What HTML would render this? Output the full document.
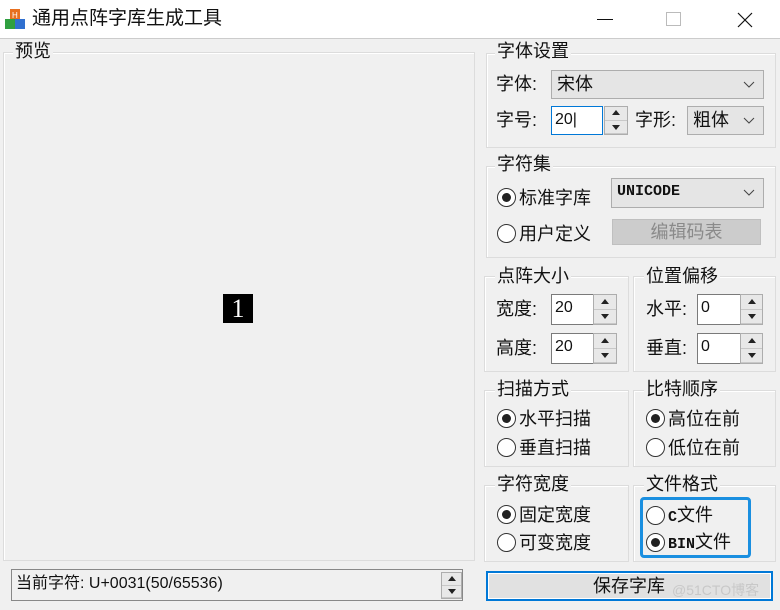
<!DOCTYPE html>
<html><head><meta charset="utf-8"><style>
*{box-sizing:border-box;margin:0;padding:0}
body{width:780px;height:610px;background:#f0f0f0;position:relative;overflow:hidden;font-family:"Liberation Sans","Noto Sans CJK SC",sans-serif;font-size:18px;color:#111}
.a{position:absolute}
.t{position:absolute;white-space:nowrap;line-height:22px}
.gb{position:absolute;border:1px solid #dcdcdc;box-shadow:inset 1px 1px 0 #fff}
.lbl{position:absolute;background:#f0f0f0;padding:0 2px;line-height:22px;white-space:nowrap;font-size:18px}
.edit{position:absolute;background:#fff;border:1px solid #7a7a7a;font-size:16px;line-height:26px;padding-left:3px}
.spin{position:absolute;border:1px solid #adadad;background:#e8e8e8}
.spin div{height:50%;border-bottom:1px solid #c8c8c8;position:relative}
.spin div:after{content:"";position:absolute;left:50%;top:50%;margin-left:-4px;border-left:4px solid transparent;border-right:4px solid transparent}
.up:after{border-bottom:5px solid #222;margin-top:-3px}
.dn:after{border-top:5px solid #222;margin-top:-2px}
.combo{position:absolute;background:#e5e5e5;border:1px solid #adadad;line-height:26px;padding-left:5px}
.combo svg{position:absolute;right:8px;top:10px}
.rad{position:absolute;width:19px;height:19px;border-radius:50%;border:1.5px solid #333;background:#fff}
.rad.on:after{content:"";position:absolute;left:3.5px;top:3.5px;width:9px;height:9px;border-radius:50%;background:#222}
</style></head><body>
<div class="a" style="left:0;top:0;width:780px;height:39px;background:#fff;border-bottom:1px solid #ccc"></div>
<svg class="a" style="left:4px;top:8px" width="22" height="22"><rect x="6" y="1" width="10" height="10" fill="#e87020"/><text x="8" y="10" font-size="8" fill="#fff">H</text><rect x="1" y="11" width="10" height="10" fill="#30a040"/><rect x="11" y="11" width="10" height="10" fill="#3070d0"/></svg>
<div class="t" style="left:32px;top:8px;font-size:19px">通用点阵字库生成工具</div>
<div class="a" style="left:597px;top:19px;width:16px;height:1px;background:#111"></div>
<div class="a" style="left:666px;top:12px;width:15px;height:14px;border:1px solid #bbb"></div>
<svg class="a" style="left:737px;top:12px" width="16" height="16"><path d="M1 1L15 15M15 1L1 15" stroke="#111" stroke-width="1.2"/></svg>

<div class="gb" style="left:3px;top:52px;width:472px;height:509px"></div>
<div class="lbl" style="left:13px;top:40px">预览</div>
<div class="a" style="left:223px;top:294px;width:30px;height:29px;background:#000;color:#fff;font-family:'Liberation Serif',serif;font-size:26px;text-align:center;line-height:30px">1</div>

<div class="a" style="left:11px;top:569px;width:452px;height:32px;border:1px solid #888;background:#f0f0f0"></div>
<div class="t" style="left:16px;top:573px;font-size:16px">当前字符: U+0031(50/65536)</div>
<div class="spin" style="left:441px;top:572px;width:21px;height:27px"><div class="up"></div><div class="dn"></div></div>

<!-- 字体设置 -->
<div class="gb" style="left:486px;top:53px;width:290px;height:95px"></div>
<div class="lbl" style="left:495px;top:40px">字体设置</div>
<div class="t" style="left:496px;top:73px">字体:</div>
<div class="combo" style="left:551px;top:70px;width:213px;height:29px">宋体<svg width="12" height="8"><path d="M1 1L6 6L11 1" stroke="#444" fill="none"/></svg></div>
<div class="t" style="left:496px;top:109px">字号:</div>
<div class="edit" style="left:551px;top:106px;width:52px;height:29px;border:1.5px solid #0078d7">20|</div>
<div class="spin" style="left:604px;top:106px;width:24px;height:29px"><div class="up"></div><div class="dn"></div></div>
<div class="t" style="left:635px;top:109px">字形:</div>
<div class="combo" style="left:687px;top:106px;width:77px;height:29px">粗体<svg width="12" height="8"><path d="M1 1L6 6L11 1" stroke="#444" fill="none"/></svg></div>

<!-- 字符集 -->
<div class="gb" style="left:486px;top:166px;width:290px;height:92px"></div>
<div class="lbl" style="left:495px;top:153px">字符集</div>
<div class="rad on" style="left:497px;top:188px"></div><div class="t" style="left:519px;top:187px">标准字库</div>
<div class="combo" style="left:611px;top:178px;width:153px;height:30px;font-family:'Liberation Mono',monospace;font-size:15px;font-weight:bold">UNICODE<svg width="12" height="8"><path d="M1 1L6 6L11 1" stroke="#444" fill="none"/></svg></div>
<div class="rad" style="left:497px;top:224px"></div><div class="t" style="left:519px;top:223px">用户定义</div>
<div class="a" style="left:612px;top:219px;width:149px;height:26px;background:#ccc;border:1px solid #bfbfbf;color:#8a8a8a;text-align:center;line-height:24px">编辑码表</div>

<!-- 点阵大小 -->
<div class="gb" style="left:484px;top:276px;width:145px;height:96px"></div>
<div class="lbl" style="left:495px;top:265px">点阵大小</div>
<div class="t" style="left:496px;top:298px">宽度:</div>
<div class="edit" style="left:551px;top:294px;width:43px;height:31px">20</div>
<div class="spin" style="left:593px;top:294px;width:24px;height:31px"><div class="up"></div><div class="dn"></div></div>
<div class="t" style="left:496px;top:337px">高度:</div>
<div class="edit" style="left:551px;top:333px;width:43px;height:31px">20</div>
<div class="spin" style="left:593px;top:333px;width:24px;height:31px"><div class="up"></div><div class="dn"></div></div>

<!-- 位置偏移 -->
<div class="gb" style="left:633px;top:276px;width:143px;height:96px"></div>
<div class="lbl" style="left:644px;top:265px">位置偏移</div>
<div class="t" style="left:646px;top:298px">水平:</div>
<div class="edit" style="left:697px;top:294px;width:44px;height:31px">0</div>
<div class="spin" style="left:740px;top:294px;width:23px;height:31px"><div class="up"></div><div class="dn"></div></div>
<div class="t" style="left:646px;top:337px">垂直:</div>
<div class="edit" style="left:697px;top:333px;width:44px;height:31px">0</div>
<div class="spin" style="left:740px;top:333px;width:23px;height:31px"><div class="up"></div><div class="dn"></div></div>

<!-- 扫描方式 -->
<div class="gb" style="left:484px;top:390px;width:145px;height:77px"></div>
<div class="lbl" style="left:495px;top:378px">扫描方式</div>
<div class="rad on" style="left:497px;top:409px"></div><div class="t" style="left:519px;top:408px">水平扫描</div>
<div class="rad" style="left:497px;top:438px"></div><div class="t" style="left:519px;top:437px">垂直扫描</div>

<!-- 比特顺序 -->
<div class="gb" style="left:633px;top:390px;width:143px;height:77px"></div>
<div class="lbl" style="left:644px;top:378px">比特顺序</div>
<div class="rad on" style="left:646px;top:409px"></div><div class="t" style="left:668px;top:408px">高位在前</div>
<div class="rad" style="left:646px;top:438px"></div><div class="t" style="left:668px;top:437px">低位在前</div>

<!-- 字符宽度 -->
<div class="gb" style="left:484px;top:485px;width:145px;height:77px"></div>
<div class="lbl" style="left:495px;top:473px">字符宽度</div>
<div class="rad on" style="left:497px;top:505px"></div><div class="t" style="left:519px;top:504px">固定宽度</div>
<div class="rad" style="left:497px;top:533px"></div><div class="t" style="left:519px;top:532px">可变宽度</div>

<!-- 文件格式 -->
<div class="gb" style="left:633px;top:485px;width:143px;height:77px"></div>
<div class="lbl" style="left:644px;top:473px">文件格式</div>
<div class="a" style="left:640px;top:497px;width:111px;height:61px;border:3px solid #1a8fe0;border-radius:4px"></div>
<div class="rad" style="left:646px;top:506px"></div><div class="t" style="left:668px;top:504px"><span style="font-family:'Liberation Mono',monospace;font-weight:bold;font-size:15px">C</span>文件</div>
<div class="rad on" style="left:646px;top:533px"></div><div class="t" style="left:668px;top:531px"><span style="font-family:'Liberation Mono',monospace;font-weight:bold;font-size:15px">BIN</span>文件</div>

<!-- save -->
<div class="a" style="left:486px;top:571px;width:287px;height:30px;border:2px solid #0078d7;background:#e1e1e1;box-shadow:inset 0 0 0 1px #fff"></div>
<div class="t" style="left:593px;top:575px">保存字库</div>
<div class="t" style="left:672px;top:579px;font-size:14px;color:#c8c8c8">@51CTO博客</div>
</body></html>
